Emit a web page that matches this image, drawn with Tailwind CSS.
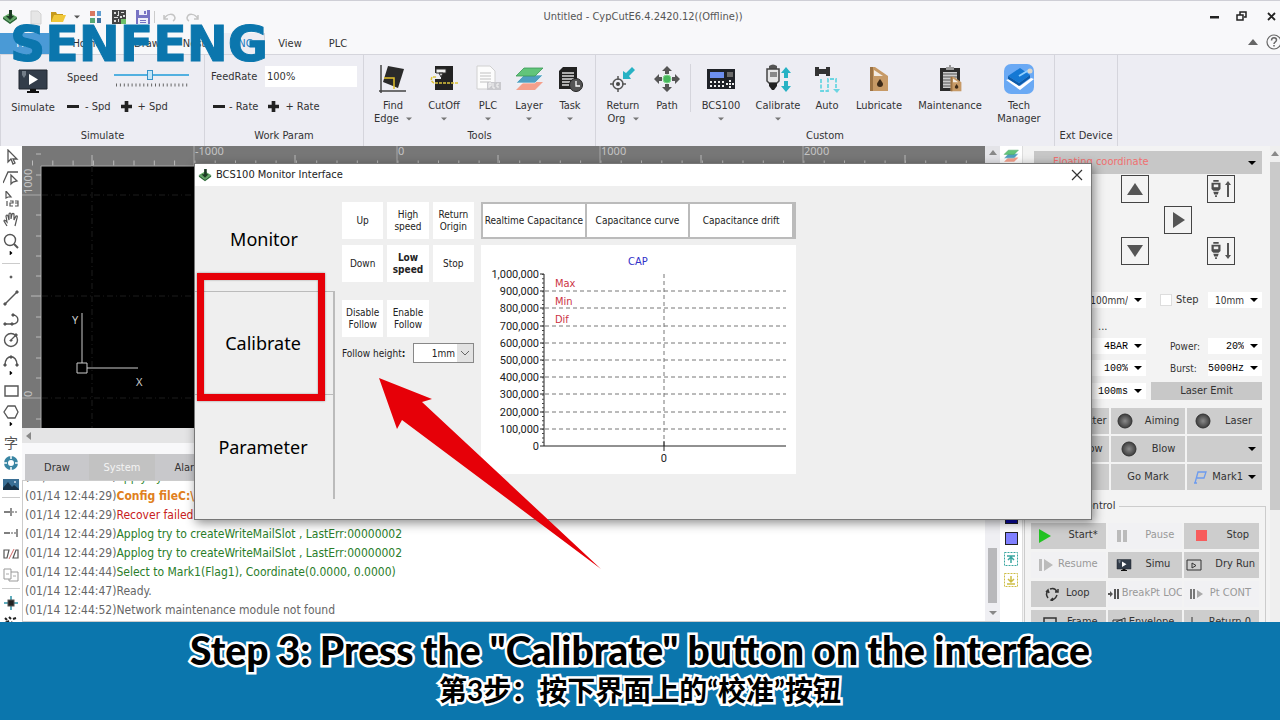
<!DOCTYPE html>
<html lang="en">

<head>
    <meta charset="utf-8">
    <title>CypCutE - BCS100 Monitor Interface</title>
    <meta name="viewport" content="width=device-width, initial-scale=1.0">
    <script src="https://cdn.jsdelivr.net/npm/@tailwindcss/browser@4"></script>
</head>

<body class="relative flex h-screen flex-col overflow-hidden bg-[#f8f8fa] font-['DejaVu_Sans_Condensed','Noto_Sans',sans-serif] text-[11px] text-[#333]">
    <!-- shared icons -->
    <svg class="absolute size-0">
        <symbol id="app" viewBox="0 0 16 16">
            <path d="M1 8l7-4 7 4-7 5z" fill="#5fa463" />
            <path d="M1 8v2l7 5 7-5V8l-7 5z" fill="#2c6b37" />
            <path d="M7 1h3v6h2l-4 4-4-4h3z" fill="#1c3a24" />
        </symbol>
        <symbol id="caret" viewBox="0 0 8 4">
            <path d="M0 0h8L4 4z" fill="currentColor" />
        </symbol>
        <symbol id="play-right" viewBox="0 0 4 6">
            <path d="M0 0l4 3-4 3z" fill="currentColor" />
        </symbol>
        <symbol id="layers" viewBox="0 0 30 28">
            <path d="M2 25l8-8h19l-8 8z" fill="#f5a08c" />
            <path d="M2 18l8-8h19l-8 8z" fill="#4f9fc0" stroke="#fff" stroke-width=".6" />
            <path d="M2 11l8-8h19l-8 8z" fill="#62c47a" stroke="#3b9a55" stroke-width=".8" />
        </symbol>
        <symbol id="monitor" viewBox="0 0 30 24">
            <path d="M1 1h28v19H1z" fill="#333d4a" stroke="#20262e" />
            <path d="M11 5l9 5.500-9 5.500z" fill="#fff" />
            <path d="M12 20h6v2h3v2H9v-2h3z" fill="#111" />
            <path d="M4 2h4v4l-2 3-2-3z" fill="#737d88" />
        </symbol>
        <symbol id="oil" viewBox="0 0 20 26">
            <path d="M1 1h5l13 9v15H1z" fill="#c79a66" />
            <path d="M1 1h3v24H1z" fill="#9c7344" />
            <path d="M5 4l9 6H5z" fill="#f4ece2" />
            <path d="M11 13q-3 4-3 5a3 3 0 006 0q0-1-3-5z" fill="#3c2a18" />
        </symbol>
        <symbol id="head" viewBox="0 0 10 20">
            <path d="M2 0h6v2H2zM0 3h10v7l-2 2H2l-2-2zM2 13h6l-1 3H3zM4 17h2v2H4z" fill="#4d4d4d" />
            <path d="M2.500 5h5v3h-5z" fill="#eee" />
        </symbol>
        <symbol id="plus" viewBox="0 0 12 12">
            <path d="M4 0h4v4h4v4H8v4H4V8H0V4h4z" fill="#222" />
        </symbol>
        <radialGradient id="ball">
            <stop offset="0" stop-color="#8a8a8a" />
            <stop offset="1" stop-color="#3e3e3e" />
        </radialGradient>
        <symbol id="lamp" viewBox="0 0 16 16">
            <circle cx="8" cy="8" r="7" fill="url(#ball)" stroke="#333" />
        </symbol>
    </svg>

    <!-- title bar -->
    <header class="flex h-[33px] shrink-0 items-center justify-between border-t border-[#cfcfd6]">
        <div class="flex w-[200px] items-center">
            <svg class="ml-0.5 size-4"><use href="#app" /></svg>
            <button aria-label="New" class="ml-2.5"><svg class="h-4 w-4" viewBox="0 0 16 16"><path d="M3 2h7l3 3v10H3z" fill="#e6e6e6" stroke="#d2d2d2" /></svg></button>
            <button aria-label="Open" class="ml-1.5"><svg class="h-4 w-4" viewBox="0 0 16 16"><path d="M1 3h5l1 2h6v8H1z" fill="#c69a1c" /><path d="M1 13l3-7h12l-3 7z" fill="#f1c839" /></svg></button>
            <button aria-label="Open menu" class="ml-2 text-[#555]"><svg class="h-1 w-1.5"><use href="#caret" /></svg></button>
            <button aria-label="Apps" class="ml-2.5"><svg class="h-3.5 w-3" viewBox="0 0 12 14"><path d="M0 1h5v5H0z" fill="#d9785f" /><path d="M7 1h4v5H7z" fill="#5f9ed0" /><path d="M0 8h5v5H0z" fill="#57a874" /><path d="M7 8h4v5H7z" fill="#41719f" /></svg></button>
            <button aria-label="Code" class="ml-2.5"><svg class="size-3.5" viewBox="0 0 14 14"><path d="M0 0h14v14H0z" fill="#444" /><path d="M2 2h2v2H2zM6 1h1v4H6zM9 2h3v1H9zM2 7h4v1H2zM8 6h2v2H8zM11 5h2v2h-2zM2 10h2v2H2zM6 9h1v3H6zM5 5h2v1H5z" fill="#ddd" /><path d="M9 9h5v5H9z" fill="#6fc06a" /></svg></button>
            <button aria-label="Save" class="ml-2.5"><svg class="size-3.5" viewBox="0 0 14 14"><path d="M0 0h14v14H0z" fill="#7773c4" /><path d="M3 0h8v5H3zM2 8h10v6H2z" fill="#eeeefa" /><path d="M8 1h2v3H8zM4 10h6v1H4zM4 12h6v1H4z" fill="#7773c4" /></svg></button>
            <div class="mx-1 h-3 w-px bg-[#ccc]"></div>
            <button aria-label="Undo" class="ml-1"><svg class="h-2.5 w-3.5" viewBox="0 0 14 10" fill="none" stroke="#c4c4c4" stroke-width="1.500"><path d="M1 3v4h4M1 7c3-6 10-6 11-1q0 2-2 3" /></svg></button>
            <button aria-label="Redo" class="ml-2"><svg class="h-2.5 w-3.5" viewBox="0 0 14 10" fill="none" stroke="#c4c4c4" stroke-width="1.500"><path d="M13 3v4H9M13 7C10 1 3 1 2 6q0 2 2 3" /></svg></button>
        </div>
        <h1 class="pl-1.5 text-[#555]">Untitled - CypCutE6.4.2420.12((Offline))</h1>
        <div class="flex w-[200px] items-center justify-end gap-4">
            <button aria-label="Minimize" class="mr-0.5"><svg class="h-3 w-2.5" viewBox="0 0 10 12"><path d="M0 5h9v2.500H0z" fill="#222" /></svg></button>
            <button aria-label="Restore" class="-ml-0.5"><svg class="size-3" viewBox="0 0 12 12" fill="none" stroke="#222" stroke-width="1.500"><path d="M1 4h6v5H1zM4 4V1h6v5H8" /></svg></button>
            <button aria-label="Close"><svg class="mx-0.5 size-3" viewBox="0 0 12 12" stroke="#222" stroke-width="1.800"><path d="M2 2l7 7M9 2L2 9" /></svg></button>
        </div>
    </header>

    <!-- ribbon tabs -->
    <nav class="flex h-[22px] shrink-0 items-center border-b border-[#d5d5dc] [&>button]:pt-0.5">
        <button class="h-full w-[49px] bg-[#4a9ad6] text-white">File</button>
        <button class="h-full w-[76px]">Home</button>
        <button class="h-full w-[44px]">Draw</button>
        <button class="h-full w-[50px]">Nest</button>
        <button class="h-full w-[46px] border-x border-[#d5d5dc] bg-[#ededf3] text-[#1d7abf]">CNC</button>
        <button class="h-full w-[50px]">View</button>
        <button class="h-full w-[46px]">PLC</button>
        <div class="ml-auto flex items-center gap-2 pb-1 text-[#666]">
            <svg class="h-1.5 w-2.5" viewBox="0 0 10 6"><path d="M0 6h10L5 0z" fill="currentColor" /></svg>
            <button aria-label="Help" class="-mr-0.5"><svg class="size-4" viewBox="0 0 16 16" fill="none" stroke="currentColor" stroke-width="1.200"><circle cx="8" cy="8" r="7" /><path d="M5.500 6.500c0-4 5-3.500 5-.5 0 2-2.500 2-2.500 4M8 11v1.500" stroke-width="1.500" /></svg></button>
        </div>
    </nav>

    <!-- ribbon -->
    <section class="flex h-[91px] shrink-0 bg-[#ededf3] leading-[13px]">
        <div class="flex w-[205px] flex-col border-x border-[#d5d5dc]">
            <div class="flex h-[74px] pt-2">
                <button class="flex w-16 flex-col items-center gap-2 self-start pt-1.5"><svg class="h-6 w-[30px]"><use href="#monitor" /></svg>Simulate</button>
                <div class="flex-1 pl-0.5">
                    <div class="flex h-7 items-center">
                        <label for="speed" class="w-[47px]">Speed</label>
                        <div class="w-[75px]">
                            <input id="speed" type="range" value="48" class="block h-4 w-full appearance-none bg-transparent [&::-webkit-slider-runnable-track]:h-0.5 [&::-webkit-slider-runnable-track]:bg-[#52b0e0] [&::-webkit-slider-thumb]:-mt-1 [&::-webkit-slider-thumb]:h-2.5 [&::-webkit-slider-thumb]:w-1.5 [&::-webkit-slider-thumb]:appearance-none [&::-webkit-slider-thumb]:border [&::-webkit-slider-thumb]:border-[#3793c9] [&::-webkit-slider-thumb]:bg-[#c3e6f8]">
                            <svg class="h-1 w-full"><line x1="2" y1="2" x2="74" y2="2" stroke="#666" stroke-width="3" stroke-dasharray="1 2.900" /></svg>
                        </div>
                    </div>
                    <div class="mt-[9px] flex gap-2.5">
                        <button class="flex items-center gap-1.5"><span class="h-[3px] w-3 bg-[#222]"></span>- Spd</button>
                        <button class="flex items-center gap-1.5"><svg class="size-[11px]"><use href="#plus" /></svg>+ Spd</button>
                    </div>
                </div>
            </div>
            <p class="text-center">Simulate</p>
        </div>
        <div class="flex w-[159px] flex-col border-r border-[#d5d5dc]">
            <div class="h-[74px] pt-[11px] pl-1.5">
                <div class="flex items-center">
                    <label for="feed" class="w-[54px]">FeedRate</label>
                    <input id="feed" value="100%" class="h-[21px] w-[92px] bg-white px-0.5">
                </div>
                <div class="mt-[13px] flex gap-2.5 pl-0.5">
                    <button class="flex items-center gap-1"><span class="h-[3px] w-3 bg-[#222]"></span>- Rate</button>
                    <button class="flex items-center gap-1.5"><svg class="size-[11px]"><use href="#plus" /></svg>+ Rate</button>
                </div>
            </div>
            <p class="text-center">Work Param</p>
        </div>
        <div class="flex w-[232px] flex-col border-r border-[#d5d5dc]">
            <div class="flex h-[74px] items-start pt-[9px] pl-[3px]">
                <button class="flex w-[52px] flex-col items-center gap-[5px]"><svg class="size-[30px]" viewBox="0 0 30 30"><path d="M10 2l16 3-6 19-15-6z" fill="#2a2a2a" /><path d="M3 1v28M1 27h27" stroke="#444" stroke-width="1.500" /><path d="M6 14h10v11" fill="none" stroke="#e3c22c" stroke-width="1.500" /></svg><span>Find<br>Edge <svg class="ml-1 inline h-1 w-1.5 text-[#777]"><use href="#caret" /></svg></span></button>
                <button class="flex w-[50px] flex-col items-center gap-[5px]"><svg class="size-[30px]" viewBox="0 0 30 30"><path d="M6 2h18v24H6V15h6V9H6z" fill="#222" /><path d="M7 5h10v4H7zM10 9h4l-2 4z" fill="#f0f0f0" stroke="#333" /><path d="M29 19H5q-4-2-2-6h5" fill="none" stroke="#dcc33b" stroke-width="1.500" stroke-dasharray="3 1" /></svg>CutOff<svg class="h-1 w-1.5 text-[#777]"><use href="#caret" /></svg></button>
                <button class="flex w-[38px] flex-col items-center gap-[5px]"><svg class="size-[30px]" viewBox="0 0 30 30"><path d="M4 2h13l5 5v18H4z" fill="#fcfcfc" stroke="#d0d0d0" /><path d="M7 9h11M7 12h11M7 15h11M7 18h11" stroke="#d3d3d3" stroke-width="1.500" /><path d="M14 18h14v8H14z" fill="#c9c9cd" /><path d="M16 24v-5h2v3h-2M20 19v5h2M26 20h-2v3h2" fill="none" stroke="#f4f4f4" /></svg>PLC<svg class="h-1 w-1.5 text-[#777]"><use href="#caret" /></svg></button>
                <button class="flex w-[44px] flex-col items-center gap-[5px]"><svg class="size-[30px]"><use href="#layers" /></svg>Layer<svg class="h-1 w-1.5 text-[#777]"><use href="#caret" /></svg></button>
                <button class="flex w-[38px] flex-col items-center gap-[5px]"><svg class="size-[30px]" viewBox="0 0 30 30"><path d="M8 3h14v22H4V7z" fill="#222" /><path d="M7 9h12M7 12h12M7 15h12M7 18h8M7 21h7" stroke="#ddd" stroke-width="1.300" /><circle cx="21" cy="21" r="6.500" fill="#555" stroke="#222" /><path d="M21 17v5h4" fill="none" stroke="#fff" stroke-width="1.300" /></svg>Task<svg class="h-1 w-1.5 text-[#777]"><use href="#caret" /></svg></button>
            </div>
            <p class="text-center">Tools</p>
        </div>
        <div class="flex w-[459px] flex-col border-r border-[#d5d5dc]">
            <div class="flex h-[74px] items-start pt-[9px] pl-[3px]">
                <button class="flex w-[48px] flex-col items-center gap-[5px]"><svg class="size-[30px]" viewBox="0 0 30 30"><g fill="none" stroke="#555" stroke-width="1.500"><circle cx="10" cy="20" r="5" /><path d="M10 12v4M10 24v4M2 20h4M14 20h4" /></g><circle cx="10" cy="20" r="2" fill="#444" /><path d="M15 15V7l3 2 6-6 3 3-6 6 2 3z" fill="#27b2c4" /></svg><span>Return<br>Org <svg class="ml-1 inline h-1 w-1.5 text-[#777]"><use href="#caret" /></svg></span></button>
                <button class="flex w-[40px] flex-col items-center gap-[5px]"><svg class="size-[30px]" viewBox="0 0 30 30"><path d="M15 2l5 5h-3v3h-4V7h-3zM15 28l5-5h-3v-3h-4v3h-3zM2 15l5-5v3h3v4H7v3zM28 15l-5-5v3h-3v4h3v3z" fill="#555" /><circle cx="15" cy="15" r="4" fill="#47b85c" /><circle cx="15" cy="15" r="4" fill="none" stroke="#81d68f" /></svg>Path</button>
                <div class="mx-[3px] h-12 w-px bg-[#d5d5dc]"></div>
                <button class="flex w-[54px] flex-col items-center gap-[5px]"><svg class="size-[30px]" viewBox="0 0 30 30"><path d="M1 5h28v20H1z" fill="#1f2228" /><path d="M4 8h14v6H4z" fill="#6d8ff0" /><path d="M21 8h6v5h-6z" fill="#6b6b6b" /><path d="M4 17h2v2H4zM8 17h2v2H8zM12 17h2v2h-2zM16 17h2v2h-2zM4 21h2v2H4zM8 21h2v2H8zM12 21h2v2h-2zM16 21h2v2h-2zM23 16h2v2h-2zM20 19h2v2h-2zM26 19h2v2h-2zM23 19h2v2h-2zM23 22h2v2h-2z" fill="#eee" /></svg>BCS100<svg class="h-1 w-1.5 text-[#777]"><use href="#caret" /></svg></button>
                <button class="flex w-[60px] flex-col items-center gap-[5px]"><svg class="size-[30px]" viewBox="0 0 30 30"><path d="M6 2q4-3 8 0v3H6z" fill="#555" /><path d="M4 5h12v12l-2 2H6l-2-2z" fill="#e5e5e5" stroke="#444" stroke-width="1.500" /><path d="M7 8h7v5H7z" fill="#888" /><path d="M6 19h8v3l-3 4H9l-3-4z" fill="#222" /><path d="M23 3l5 6h-3v5h-4V9h-3zM23 28l5-6h-3v-5h-4v5h-3z" fill="#27b2c4" /></svg>Calibrate<svg class="h-1 w-1.5 text-[#777]"><use href="#caret" /></svg></button>
                <button class="flex w-[38px] flex-col items-center gap-[5px]"><svg class="size-[30px]" viewBox="0 0 30 30"><path d="M3 3h4v2h7V3h4v9h-4v-2H7v2H3z" fill="#333" /><path d="M9 15v12h7V15h8v10" fill="none" stroke="#6bd5e2" stroke-width="1.800" stroke-dasharray="4 1.500" /><path d="M21 25h7l-3 4z" fill="#6bd5e2" /></svg>Auto</button>
                <button class="flex w-[66px] flex-col items-center gap-[5px]"><svg class="h-[30px] w-5"><use href="#oil" /></svg>Lubricate</button>
                <button class="flex w-[76px] flex-col items-center gap-[5px]"><svg class="size-[30px]" viewBox="0 0 30 30"><path d="M5 4h20v23H5z" fill="#2c2c2c" /><path d="M8 8h14v16H8z" fill="#ccc" /><path d="M8 10h14M8 13h14M8 16h14M8 19h14M8 22h14" stroke="#555" stroke-width="1.200" /><path d="M11 3h3V1h2v2h3v3h-8z" fill="#999" /><svg x="15" y="12" width="12" height="16"><use href="#oil" /></svg></svg>Maintenance</button>
                <button class="flex w-[62px] flex-col items-center gap-[5px]"><svg class="size-[30px]" viewBox="0 0 30 30"><rect width="30" height="30" rx="7" fill="#6aa9f4" /><path d="M2 16l3-1 11 7 11-8 3 1-14 11z" fill="#fff" /><path d="M4 12l12-8 10 7-11 8z" fill="#1478d4" /><path d="M4 12l11 7 11-8v3l-11 8-11-7z" fill="#0d5cab" /><path d="M15 12l10-6" stroke="#8fd0ff" stroke-width="2" /><circle cx="26" cy="7" r="2.500" fill="#dcd6ca" /></svg><span>Tech<br>Manager</span></button>
            </div>
            <p class="text-center">Custom</p>
        </div>
        <div class="w-[63px] border-r border-[#d5d5dc] pt-[74px] text-center whitespace-nowrap">Ext Device</div>
    </section>

    <!-- workspace -->
    <main class="flex min-h-0 flex-1">
        <aside class="flex w-[22px] shrink-0 flex-col overflow-hidden bg-white text-[#555] [&>button]:flex [&>button]:h-[21px] [&>button]:shrink-0 [&>button]:items-center [&>button]:justify-center [&_svg]:w-4 [&_svg]:stroke-current [&_svg]:fill-none">
            <button aria-label="Select"><svg class="h-4" viewBox="0 0 16 16"><path d="M5 1v12l3-3 2 5 2-1-2-4h4z" stroke-width="1.300" /></svg></button>
            <button aria-label="Node"><svg class="h-4" viewBox="0 0 16 16"><path d="M0 13L5 2h10M8 5v9l2-2 4-1z" stroke-width="1.300" /></svg></button>
            <button aria-label="Sequence"><svg class="h-4" viewBox="0 0 16 16"><path d="M3 0v7l2-1h3zM4 10v5M7 10h3v2H7v3h3M12 10h3v5h-3M12 12h3" stroke-width="1.200" /></svg></button>
            <button aria-label="Pan"><svg class="h-4" viewBox="0 0 16 16"><path d="M4 14L1 9q0-2 3 1L3 4q1-2 2 0l1 4V2q1-2 2 0v5l1-5q1-1 2 0v6l2-4q2-1 1 2l-2 8" stroke-width="1.200" /></svg></button>
            <button aria-label="Zoom"><svg class="h-4" viewBox="0 0 16 16"><circle cx="7" cy="7" r="5.500" stroke-width="1.400" /><path d="M11 11l4 4" stroke-width="2" /></svg></button>
            <svg class="h-1 shrink-0 self-center text-black" viewBox="0 0 4 6"><use href="#play-right" /></svg>
            <hr class="mx-0.5 mt-2 mb-0.5 border-[#ccc]">
            <button aria-label="Point"><svg class="h-4" viewBox="0 0 16 16"><circle cx="8" cy="8" r="1" fill="currentColor" /></svg></button>
            <button aria-label="Line"><svg class="h-4" viewBox="0 0 16 16"><path d="M2 14L14 2" stroke-width="1.400" /><path d="M1 13h2v2H1zM13 1h2v2h-2z" fill="currentColor" /></svg></button>
            <button aria-label="Polyline"><svg class="h-4" viewBox="0 0 16 16"><path d="M2 13h8c7 0 6-9 0-9" stroke-width="1.400" /><path d="M1 12h2v2H1zM8 12h2v2H8zM9 3h2v2H9z" fill="currentColor" /></svg></button>
            <button aria-label="Circle"><svg class="h-4" viewBox="0 0 16 16"><circle cx="8" cy="8" r="6.500" stroke-width="1.400" /><path d="M8 8l5-5" stroke-width="1.200" /><path d="M7 8h2v1H7zM12 2h2v2h-2z" fill="currentColor" /></svg></button>
            <button aria-label="Arc"><svg class="h-4" viewBox="0 0 16 16"><path d="M2 12C2 1 14 1 14 12" stroke-width="1.400" /><path d="M1 11h2v2H1zM13 11h2v2h-2zM7 3h2v2H7z" fill="currentColor" /></svg></button>
            <svg class="h-1 shrink-0 self-center text-black" viewBox="0 0 4 6"><use href="#play-right" /></svg>
            <button aria-label="Rectangle" class="mt-[5px]"><svg class="h-4" viewBox="0 0 16 16"><path d="M2 3h13v10H2z" stroke-width="1.400" /></svg></button>
            <button aria-label="Polygon"><svg class="h-4" viewBox="0 0 16 16"><path d="M5 2h7l3 6-3 6H5L1 8z" stroke-width="1.300" /></svg></button>
            <svg class="h-1 shrink-0 self-center text-black" viewBox="0 0 4 6"><use href="#play-right" /></svg>
            <button class="mt-[5px] font-['Noto_Sans_CJK_SC',sans-serif] text-sm leading-none">字</button>
            <button aria-label="Ring" class="text-[#3985a3]"><svg class="h-4" viewBox="0 0 16 16"><circle cx="8" cy="8" r="5" stroke-width="4" /><path d="M8 0v4M8 12v4M0 8h4M12 8h4" stroke="#fff" stroke-width="1.500" /></svg></button>
            <button aria-label="Image"><svg class="h-4" viewBox="0 0 16 16"><path d="M0 3h16v11H0z" fill="#3a6f95" stroke="none" /><path d="M0 12l5-6 4 5 2-2 5 4v1H0z" fill="#183248" stroke="none" /><circle cx="12" cy="6" r="1" fill="#cde" stroke="none" /></svg></button>
            <hr class="mx-0.5 my-[3px] border-[#ccc]">
            <button aria-label="Trim"><svg class="h-4" viewBox="0 0 16 16"><path d="M1 8h6M8 4v8" stroke-width="1.300" /><path d="M9 8h6" stroke-dasharray="2 1" /></svg></button>
            <button aria-label="Extend"><svg class="h-4" viewBox="0 0 16 16"><path d="M1 8h6M14 4v8" stroke-width="1.300" /><path d="M8 8h6" stroke-dasharray="2 1" /></svg></button>
            <button aria-label="Split"><svg class="h-4" viewBox="0 0 16 16"><path d="M1 4h5l-2 8H1zM10 12l3-8h2v8z" stroke-width="1.200" /><path d="M6 13l5-10" stroke="#d46a6a" /></svg></button>
            <button aria-label="Merge"><svg class="h-4" viewBox="0 0 16 16"><path d="M1 2h7v10H1zM8 5h7v9H6v-2" stroke="#999" /><path d="M3 7h3M10 9h3" stroke="#aaa" /></svg></button>
            <hr class="mx-0.5 my-[3px] border-[#ccc]">
            <button aria-label="Center"><svg class="h-4" viewBox="0 0 16 16"><path d="M8 1v14M1 8h14" stroke="#2d93a8" stroke-width="1.500" /><rect x="5" y="5" width="6" height="6" fill="#222" /></svg></button>
            <button aria-label="Scatter"><svg class="h-4" viewBox="0 0 16 16"><path d="M2 2l2 2M6 1l2 2M10 3l3-1M2 7l4-2M8 6l3 2M4 10l3-1" stroke="#222" stroke-width="2" /></svg></button>
        </aside>

        <div class="flex min-w-0 flex-1 flex-col">
            <div class="flex h-[282px] shrink-0">
                <!-- drawing canvas with rulers -->
                <svg class="h-full min-w-0 flex-1 bg-[#777] font-['Noto_Sans',sans-serif] text-[11px]" fill="none">
                    <rect x="19" y="20" width="100%" height="262" fill="#000" />
                    <g stroke="#bbb">
                        <path d="M19 20v262M19 20h960M172 0v20M375 0v20M578 0v20M781 0v20M0 49h19M0 252h19" stroke="#aaa" />
                        <line x1="10" y1="17" x2="963" y2="17" stroke-width="5" stroke-dasharray="1 19.300" />
                        <path d="M70 9v11M273 9v11M476 9v11M679 9v11M883 9v11M9 150h10M14 8h5M14 29h5M14 69h5M14 90h5M14 110h5M14 130h5M14 171h5M14 191h5M14 212h5M14 232h5M14 273h5" />
                    </g>
                    <g fill="#c4c4c4">
                        <text x="173" y="9">-1000</text>
                        <text x="376" y="9">0</text>
                        <text x="579" y="9">1000</text>
                        <text x="782" y="9">2000</text>
                        <text transform="translate(10 48) rotate(-90)">1000</text>
                        <text transform="translate(10 251) rotate(-90)">0</text>
                    </g>
                    <path d="M70 20v262M20 49h950M20 150h950M20 252h950" stroke="#1c1c1c" stroke-dasharray="6 3 1 3" />
                    <path d="M60 167v50M65 222h51M55 217h10v10H55z" stroke="#ccc" />
                    <g fill="#ccc">
                        <text x="50" y="178">Y</text>
                        <text x="114" y="240">X</text>
                    </g>
                </svg>
                <div class="w-[15px] bg-[#e4e4e8] pt-1 text-[#888]"><svg class="mx-auto h-1.5 w-2" viewBox="0 0 8 6"><path d="M0 5h8L4 0z" fill="currentColor" /></svg></div>
            </div>
            <div class="flex h-[15px] shrink-0 items-center bg-[#e4e4e5] pl-1 text-[#888]"><svg class="h-2 w-1.5" viewBox="0 0 6 8"><path d="M5 0v8L0 4z" fill="currentColor" /></svg></div>
            <div class="mt-[11px] ml-[3px] flex h-[26px] shrink-0 items-center bg-[#c8c8cb] [&>button]:pt-0.5">
                <button class="h-full w-16">Draw</button>
                <button class="h-full w-[66px] bg-[#c2c2c2] text-[#f4f4f4]">System</button>
                <button class="h-full w-[68px]">Alarm</button>
            </div>
            <!-- log -->
            <div class="flex min-h-0 flex-1 border-y border-l border-[#ccc] bg-white">
                <div class="flex min-w-0 flex-1 flex-col justify-end overflow-hidden pl-0.5 text-xs leading-[19px] whitespace-nowrap text-[#666]">
                    <p>(01/14 12:44:29)<span class="text-[#2f8a2f]">Apply system config</span></p>
                    <p>(01/14 12:44:29)<b class="text-[#e08020]">Config fileC:\Program Files</b></p>
                    <p>(01/14 12:44:29)<span class="text-[#c82020]">Recover failed</span></p>
                    <p>(01/14 12:44:29)<span class="text-[#2a7d2a]">Applog try to createWriteMailSlot , LastErr:00000002</span></p>
                    <p>(01/14 12:44:29)<span class="text-[#2a7d2a]">Applog try to createWriteMailSlot , LastErr:00000002</span></p>
                    <p>(01/14 12:44:44)<span class="text-[#2a7d2a]">Select to Mark1(Flag1), Coordinate(0.0000, 0.0000)</span></p>
                    <p>(01/14 12:44:47)Ready.</p>
                    <p class="mb-px">(01/14 12:44:52)Network maintenance module not found</p>
                </div>
                <div class="flex w-[15px] flex-col items-center bg-[#efeff3] text-[#888]">
                    <div class="mt-auto mb-2 h-[55px] w-[9px] bg-[#b8b8bb]"></div>
                    <svg class="mb-1.5 h-1 w-2"><use href="#caret" /></svg>
                </div>
            </div>
        </div>

        <!-- layer strip -->
        <aside class="flex w-[22px] shrink-0 flex-col items-center bg-white pt-0.5">
            <svg class="size-4 shrink-0" viewBox="0 0 30 28"><use href="#layers" /></svg>
            <button aria-label="Layer 13" class="mt-[347px] h-[13px] w-[13px] shrink-0 border border-[#222] bg-[#0b0b9c]"></button>
            <button aria-label="Layer 14" class="mt-2 h-[13px] w-[13px] shrink-0 border border-[#222] bg-[#8080ff]"></button>
            <svg class="mt-[7px] size-3.5 shrink-0" viewBox="0 0 14 14" fill="none" stroke="#3aa6a0"><path d="M.5.500h13v13H.5z" stroke-dasharray="2 1" /><path d="M3 4h8M7 11V6M4 8l3-3 3 3" stroke-width="1.500" /></svg>
            <svg class="mt-[7px] size-3.5 shrink-0" viewBox="0 0 14 14" fill="none" stroke="#cdbd45"><path d="M.5.500h13v13H.5z" stroke-dasharray="2 1" /><path d="M3 11h8M7 3v5M4 6l3 3 3-3" stroke-width="1.500" /></svg>
        </aside>

        <!-- motion and laser panel -->
        <aside class="w-[248px] shrink-0 overflow-hidden border-l border-[#ddd] bg-[#f3f3f3] pt-[5px] pr-2 pl-[11px]">
            <label class="flex h-[23px] items-center bg-[#c7c7c7] pr-1.5 pl-[19px]">
                <select aria-label="Coordinate system" class="flex-1 appearance-none text-[#f07070] outline-none"><option>Floating coordinate</option></select>
                <svg class="h-1 w-2 text-black"><use href="#caret" /></svg>
            </label>
            <div class="mt-px mr-[27px] ml-[29px] grid grid-cols-4 grid-rows-3 gap-y-[3px] [&>button]:flex [&>button]:size-7 [&>button]:items-center [&>button]:justify-center [&>button]:justify-self-end [&>button]:border [&>button]:border-[#444]">
                <button aria-label="Y up" class="col-start-2"><svg class="size-4" viewBox="0 0 16 16"><path d="M0 14h16L8 2z" fill="#555" /></svg></button>
                <button aria-label="Z up" class="col-start-4 gap-1"><svg class="h-[18px] w-2.5"><use href="#head" /></svg><svg class="h-4 w-1.5" viewBox="0 0 6 16"><path d="M3 0l3 4H4v12H2V4H0z" fill="#555" /></svg></button>
                <button aria-label="X right" class="col-start-3 row-start-2"><svg class="size-4" viewBox="0 0 16 16"><path d="M3 0v16l12-8z" fill="#555" /></svg></button>
                <button aria-label="Y down" class="col-start-2 row-start-3"><svg class="size-4" viewBox="0 0 16 16"><path d="M0 2h16L8 14z" fill="#555" /></svg></button>
                <button aria-label="Z down" class="col-start-4 row-start-3 gap-1"><svg class="h-[18px] w-2.5"><use href="#head" /></svg><svg class="h-4 w-1.5" viewBox="0 0 6 16"><path d="M3 16l3-4H4V0H2v12H0z" fill="#555" /></svg></button>
            </div>
            <div class="mt-[27px] flex items-center [&_select]:min-w-0 [&_select]:flex-1 [&_select]:appearance-none [&_select]:text-right [&_select]:text-[10px]">
                <label class="flex h-4 w-[112px] items-center gap-1.5 bg-white pr-1"><select aria-label="Jog speed"><option>100mm/</option></select><svg class="h-1 w-2 text-black"><use href="#caret" /></svg></label>
                <input id="step" type="checkbox" class="ml-3.5 size-3 appearance-none border border-[#ddd] bg-white">
                <label for="step" class="ml-1 leading-4">Step</label>
                <label class="ml-auto flex h-4 w-[54px] items-center gap-1.5 bg-white pr-1"><select aria-label="Step length"><option>10mm</option></select><svg class="h-1 w-2 text-black"><use href="#caret" /></svg></label>
            </div>
            <p class="mt-2.5 ml-16 leading-[18px]">...</p>
            <div class="mt-0.5 grid grid-cols-[112px_1fr_54px] items-center gap-y-1.5 text-[10px] [&_select]:min-w-0 [&_select]:flex-1 [&_select]:appearance-none [&_select]:text-right">
                <label class="flex h-4 items-center gap-1.5 bg-white pr-1"><select aria-label="Gas pressure" class="font-['Liberation_Mono',monospace] text-black"><option>4BAR</option></select><svg class="h-1 w-2 text-black"><use href="#caret" /></svg></label>
                <label for="power" class="pl-6">Power:</label>
                <div class="flex h-4 items-center gap-1.5 bg-white pr-1"><select id="power" class="font-['Liberation_Mono',monospace] text-black"><option>20%</option></select><svg class="h-1 w-2 text-black"><use href="#caret" /></svg></div>
                <label class="flex h-4 items-center gap-1.5 bg-white pr-1"><select aria-label="Duty" class="font-['Liberation_Mono',monospace] text-black"><option>100%</option></select><svg class="h-1 w-2 text-black"><use href="#caret" /></svg></label>
                <label for="burst" class="pl-6">Burst:</label>
                <div class="flex h-4 items-center gap-1.5 bg-white pr-1"><select id="burst" class="font-['Liberation_Mono',monospace] text-black"><option>5000Hz</option></select><svg class="h-1 w-2 text-black"><use href="#caret" /></svg></div>
                <label class="flex h-4 items-center gap-1.5 bg-white pr-1"><select aria-label="Delay" class="font-['Liberation_Mono',monospace] text-black"><option>100ms</option></select><svg class="h-1 w-2 text-black"><use href="#caret" /></svg></label>
                <button class="col-span-2 ml-[5px] h-[18px] bg-[#c8c8c8] text-[11px]">Laser Emit</button>
            </div>
            <div class="mt-2 grid grid-cols-3 gap-0.5 [&>button]:flex [&>button]:h-[26px] [&>button]:items-center [&>button]:justify-between [&>button]:bg-[#cdcdcd] [&>button]:px-1.5">
                <button><svg class="size-4"><use href="#lamp" /></svg><span class="-mr-1">Shutter</span></button>
                <button><svg class="size-4"><use href="#lamp" /></svg>Aiming</button>
                <button><svg class="ml-0.5 size-4"><use href="#lamp" /></svg><span class="pr-1">Laser</span></button>
                <button><svg class="size-4"><use href="#lamp" /></svg>Follow</button>
                <button><svg class="ml-1 size-4"><use href="#lamp" /></svg><span class="pr-1">Blow</span></button>
                <button aria-label="Gas"><span></span><svg class="h-1 w-2 text-black"><use href="#caret" /></svg></button>
                <button aria-label="Mark list"></button>
                <button><span class="mx-auto">Go Mark</span></button>
                <button><svg class="size-3.5" viewBox="0 0 14 14" fill="none" stroke="#6c9bee" stroke-width="1.300"><path d="M1 13h3M2 13L5 2h8l-2 6H4" /></svg>Mark1<svg class="h-1 w-2 text-black"><use href="#caret" /></svg></button>
            </div>
            <fieldset class="mt-2 -mr-1 -ml-2.5 border border-[#ccc] px-1.5">
                <legend class="ml-1 px-1">Process Control</legend>
                <div class="mt-2 grid grid-cols-3 gap-x-0.5 gap-y-[3px] [&>button]:flex [&>button]:h-[26px] [&>button]:items-center [&>button]:justify-between [&>button]:overflow-hidden [&>button]:px-2 [&>button]:whitespace-nowrap">
                    <button class="bg-[#cdcdcd]"><svg class="h-3.5 w-3" viewBox="0 0 12 14"><path d="M0 0v14l12-7z" fill="#22c322" /></svg>Start*</button>
                    <button disabled class="bg-[#f1f1f3] text-[#999]"><svg class="h-3 w-3" viewBox="0 0 12 12"><path d="M1 0h4v12H1zM7 0h4v12H7z" fill="#bbb" /></svg>Pause</button>
                    <button class="bg-[#cdcdcd]"><span class="ml-1 h-[11px] w-[11px] bg-[#f75c5c]"></span><span class="pr-0.5">Stop</span></button>
                    <button disabled class="bg-[#f1f1f3] text-[#999]"><svg class="h-3 w-3.5 shrink-0" viewBox="0 0 14 12"><path d="M0 0h3v12H0zM5 0l9 6-9 6z" fill="#bbb" /></svg>Resume</button>
                    <button class="bg-[#cdcdcd]"><svg class="h-3 w-4"><use href="#monitor" /></svg><span class="pr-1">Simu</span></button>
                    <button class="bg-[#cdcdcd]"><svg class="-ml-1.5 h-3 w-4 shrink-0" viewBox="0 0 16 12" fill="none" stroke="#333"><path d="M1 1h14v10H1zM6 4v5l4-2.500z" /></svg><span class="-mr-1">Dry Run</span></button>
                    <button class="bg-[#cdcdcd]"><svg class="ml-1.5 size-3.5" viewBox="0 0 14 14" fill="none" stroke="#333" stroke-width="1.500"><path d="M3 11Q0 7 3 4M5 2q5-2 7 3M12 8q-2 5-6 5M1 5l2-2 1 3M10 5h3V2M8 11l-2 2 2 1" /></svg><span class="pr-2">Loop</span></button>
                    <button disabled class="bg-[#f1f1f3] text-[#999]"><svg class="-ml-2 h-2.5 w-3 shrink-0" viewBox="0 0 12 10"><path d="M0 4h2V2l3 3-3 3V6H0zM6 0h2v10H6zM9 0h2v10H9z" fill="#555" /></svg><span class="ml-0.5">BreakPt LOCATE</span></button>
                    <button disabled class="bg-[#f1f1f3] text-[#999]"><svg class="-ml-0.5 h-2.5 w-3.5 shrink-0" viewBox="0 0 14 10"><path d="M0 0h2v10H0zM3 0h2v10H3z" fill="#777" /><path d="M7 1l6 4-6 4z" fill="#aaa" /></svg>Pt CONT</button>
                    <button class="bg-[#cdcdcd]"><svg class="ml-1 h-3 w-4" viewBox="0 0 16 12" fill="none" stroke="#333" stroke-width="1.500"><path d="M1 1h12v10H1z" /></svg>Frame</button>
                    <button class="bg-[#cdcdcd]"><svg class="-ml-1 h-3 w-4 shrink-0" viewBox="0 0 16 12" fill="none" stroke="#333"><path d="M1 3h9v8H1zM4 5l9-4v7" /></svg>Envelope</button>
                    <button class="bg-[#cdcdcd]"><svg class="-ml-1.5 h-3 w-3 shrink-0" viewBox="0 0 12 12" fill="none" stroke="#333"><path d="M6 0v10M2 8h8" /></svg>Return 0</button>
                </div>
            </fieldset>
        </aside>
        <div class="w-2.5 shrink-0 bg-[#efefef] text-[#888]">
            <svg class="mx-auto my-1 h-2 w-2" viewBox="0 0 8 8"><path d="M0 6h8L4 1z" fill="currentColor" /></svg>
            <div class="h-[348px] bg-[#cacaca]"></div>
        </div>
    </main>

    <!-- caption -->
    <footer class="z-30 flex h-[98px] shrink-0 flex-col items-center bg-[#0b76ad] pt-1.5 text-black [-webkit-text-stroke:5px_white] [paint-order:stroke_fill]">
        <p class="font-['Lato',sans-serif] text-[39px] leading-[44px] font-black whitespace-nowrap">Step 3: Press the "Calibrate" button on the interface</p>
        <p class="font-['Lato','Noto_Sans_CJK_SC',sans-serif] text-[28px] leading-[36px] font-bold whitespace-nowrap" lang="zh">第3步：按下界面上的“校准”按钮</p>
    </footer>

    <!-- monitor window -->
    <section class="absolute top-[163px] right-[188px] left-[194px] z-10 border border-[#777] bg-[#efefef] text-[10px] text-[#222] shadow-[2px_3px_10px_rgba(0,0,0,0.45)]">
        <div class="flex h-[22px] items-center bg-white pr-2 pl-[3px]">
            <svg class="size-3.5"><use href="#app" /></svg>
            <h2 class="ml-1 text-[11px]">BCS100 Monitor Interface</h2>
            <button aria-label="Close window" class="ml-auto"><svg class="size-3" viewBox="0 0 12 12" stroke="#333" stroke-width="1.200"><path d="M1 1l10 10M11 1L1 11" /></svg></button>
        </div>
        <div class="flex h-[333px]">
            <div class="flex w-[140px] shrink-0 flex-col pt-px font-['Noto_Sans',sans-serif] text-[18px] text-black [&>button]:h-[104px] [&>button]:pr-0.5">
                <button>Monitor</button>
                <button class="border-y border-r-2 border-[#bbb]">Calibrate</button>
                <button class="border-r-2 border-[#bbb]">Parameter</button>
            </div>
            <div class="mt-4 ml-[7px] w-[132px] shrink-0">
                <div class="grid grid-cols-3 gap-x-1 gap-y-1.5 leading-3 [&>button]:h-[37px] [&>button]:bg-white">
                    <button>Up</button>
                    <button>High<br>speed</button>
                    <button>Return<br>Origin</button>
                    <button>Down</button>
                    <button class="font-bold">Low<br>speed</button>
                    <button>Stop</button>
                    <button class="mt-3">Disable<br>Follow</button>
                    <button class="mt-3">Enable<br>Follow</button>
                </div>
                <div class="mt-1.5 flex items-center justify-between whitespace-nowrap">
                    <label for="follow">Follow height<b>:</b></label>
                    <div class="flex h-5 w-[61px] items-center border border-[#888] bg-white">
                        <select id="follow" class="min-w-0 flex-1 appearance-none pr-0.5 text-right"><option>1mm</option></select>
                        <span class="flex h-full w-4 items-center justify-center bg-[#e2e2e2]"><svg class="h-1.5 w-2" viewBox="0 0 8 6" fill="none" stroke="#666"><path d="M0 1l4 4 4-4" /></svg></span>
                    </div>
                </div>
            </div>
            <div class="mt-4 ml-[7px] w-[315px] shrink-0">
                <div class="grid h-[37px] grid-cols-[1fr_1fr_1fr] gap-0.5 border-2 border-r-4 border-[#bbb] bg-[#bbb] whitespace-nowrap [&>button]:bg-white">
                    <button>Realtime Capacitance</button>
                    <button>Capacitance curve</button>
                    <button>Capacitance drift</button>
                </div>
                <svg class="mt-1.5 h-[229px] w-full bg-white" viewBox="0 0 315 229" fill="none">
                    <g stroke="#777" stroke-dasharray="4 3">
                        <path d="M64 46h241M64 63h241M64 81h241M64 98h241M64 115h241M64 132h241M64 149h241M64 167h241M64 184h241" />
                        <path d="M183 29v172" />
                    </g>
                    <path d="M63 29v172M63 201h242M183 196v10" stroke="#222" />
                    <path d="M59 29h4M59 46h4M59 63h4M59 81h4M59 98h4M59 115h4M59 132h4M59 149h4M59 167h4M59 184h4M59 201h4" stroke="#222" />
                    <line x1="62" y1="29" x2="62" y2="201" stroke="#444" stroke-width="2" stroke-dasharray="1 3.300" />
                    <g class="font-['Roboto',sans-serif] text-[11px]" fill="#222" text-anchor="end">
                        <text x="58" y="33">1,000,000</text>
                        <text x="58" y="50">900,000</text>
                        <text x="58" y="67">800,000</text>
                        <text x="58" y="85">700,000</text>
                        <text x="58" y="102">600,000</text>
                        <text x="58" y="119">500,000</text>
                        <text x="58" y="136">400,000</text>
                        <text x="58" y="153">300,000</text>
                        <text x="58" y="171">200,000</text>
                        <text x="58" y="188">100,000</text>
                        <text x="58" y="205">0</text>
                        <text x="186" y="217">0</text>
                    </g>
                    <g class="text-[11px]" fill="#cc3344">
                        <text x="74" y="42">Max</text>
                        <text x="74" y="60">Min</text>
                        <text x="74" y="78">Dif</text>
                    </g>
                    <text class="text-[11px]" x="147" y="20" fill="#3030c8">CAP</text>
                </svg>
            </div>
        </div>
    </section>

    <!-- annotations -->
    <p class="absolute top-5 left-2.5 z-20 font-['DejaVu_Sans',sans-serif] text-[49px] leading-[50px] font-bold text-[#0b76ad] [-webkit-text-stroke:1px_#0b76ad]">SENFENG</p>
    <div class="absolute top-[273px] left-[197px] z-20 size-32 border-[7px] border-[#e60008] shadow-[0_0_2px_rgba(0,0,0,0.4),inset_0_0_2px_rgba(0,0,0,0.4)]"></div>
    <svg class="absolute top-[378px] left-[379px] z-20 h-[192px] w-[223px]" viewBox="0 0 223 192"><path d="M0 0l53 21-10 3 179 167L23 42l-5 9z" fill="#e60008" /></svg>
</body>

</html>
